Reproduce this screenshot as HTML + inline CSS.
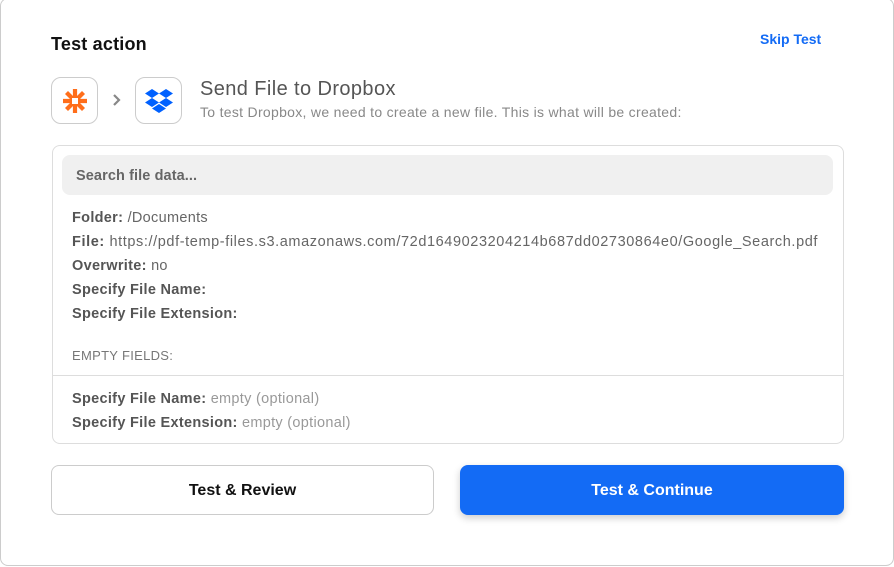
<!DOCTYPE html>
<html><head><style>
*{margin:0;padding:0;box-sizing:border-box}
body{width:894px;height:567px;background:#fff;font-family:"Liberation Sans",sans-serif;position:relative;overflow:hidden}
.card{position:absolute;left:0;top:-2px;width:894px;height:568px;border:1px solid #ccc;border-radius:8px;background:#fff}
.abs{position:absolute}
h1{position:absolute;left:51px;top:34px;font-size:18px;font-weight:bold;color:#111;letter-spacing:0.2px}
.skip{left:760px;top:31px;font-size:14px;font-weight:bold;color:#136bf5}
.ic{width:47px;height:47px;border:1px solid #ccc;border-radius:10px;top:77px;display:flex;align-items:center;justify-content:center}
.box{left:52px;top:145px;width:792px;height:299px;border:1px solid #ddd;border-radius:8px}
.search{left:62px;top:155px;width:771px;height:40px;background:#f0f0f0;border-radius:8px;font-size:14.5px;color:#666;padding:13px 0 0 14px;font-weight:bold;letter-spacing:0.1px}
.ln{left:72px;font-size:14.5px;color:#666;white-space:nowrap;letter-spacing:0.3px}
.ln b{color:#555}
.btn{top:465px;width:383px;height:50px;border-radius:8px;font-size:16px;font-weight:bold;display:flex;align-items:center;justify-content:center;padding-top:2px}
</style></head><body>
<div class="card"></div>
<h1>Test action</h1>
<div class="abs skip">Skip Test</div>
<div class="abs ic" style="left:51px"><svg width="26" height="26" viewBox="0 0 26 26"><g stroke="#ff6e1a" stroke-width="4.2" stroke-linecap="butt"><line x1="13" y1="1" x2="13" y2="25"/><line x1="1" y1="13" x2="25" y2="13"/><line x1="4.5" y1="4.5" x2="21.5" y2="21.5"/><line x1="21.5" y1="4.5" x2="4.5" y2="21.5"/></g><rect x="10" y="10" width="6" height="6" fill="#fff"/></svg></div>
<svg class="abs" style="left:112px;top:93px" width="10" height="14" viewBox="0 0 10 14"><path d="M2 2l5 5-5 5" fill="none" stroke="#888" stroke-width="2.2"/></svg>
<div class="abs ic" style="left:135px"><svg width="28" height="26" viewBox="0 0 28 26" fill="#0061ff"><path d="M7 1l7 4.5-7 4.5-7-4.5z"/><path d="M21 1l7 4.5-7 4.5-7-4.5z"/><path d="M0 14.5l7-4.5 7 4.5-7 4.5z"/><path d="M14 14.5l7-4.5 7 4.5-7 4.5z"/><path d="M7 20.5l7-4.5 7 4.5-7 4.5z"/></svg></div>
<div class="abs" style="left:200px;top:78px;font-size:20px;color:#555;letter-spacing:0.4px">Send File to Dropbox</div>
<div class="abs" style="left:200px;top:104px;font-size:14px;color:#888;letter-spacing:0.3px">To test Dropbox, we need to create a new file. This is what will be created:</div>
<div class="abs box"></div>
<div class="abs search">Search file data...</div>
<div class="abs ln" style="top:210px"><b>Folder:</b> /Documents</div>
<div class="abs ln" style="top:234px;letter-spacing:0.6px"><b>File:</b> https://pdf-temp-files.s3.amazonaws.com/72d1649023204214b687dd02730864e0/Google_Search.pdf</div>
<div class="abs ln" style="top:258px"><b>Overwrite:</b> no</div>
<div class="abs ln" style="top:282px"><b>Specify File Name:</b></div>
<div class="abs ln" style="top:306px"><b>Specify File Extension:</b></div>
<div class="abs ln" style="top:348px;font-size:13px;color:#777">EMPTY FIELDS:</div>
<div class="abs" style="left:52px;top:375px;width:792px;height:1px;background:#ddd"></div>
<div class="abs ln" style="top:391px"><b>Specify File Name:</b> <span style="color:#999">empty (optional)</span></div>
<div class="abs ln" style="top:415px"><b>Specify File Extension:</b> <span style="color:#999">empty (optional)</span></div>
<div class="abs btn" style="left:51px;border:1px solid #ccc;color:#111">Test &amp; Review</div>
<div class="abs btn" style="left:460px;width:384px;background:#136bf5;color:#fff;box-shadow:0 3px 8px rgba(0,0,0,.2)">Test &amp; Continue</div>
</body></html>
